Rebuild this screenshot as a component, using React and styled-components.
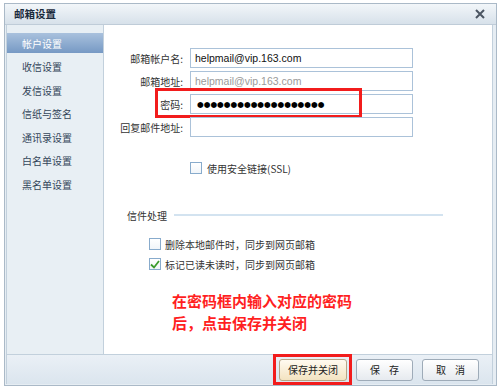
import React from "react";
import styled, { createGlobalStyle } from "styled-components";

const GlobalStyle = createGlobalStyle`
  html, body { margin: 0; padding: 0; background: #ffffff; }
  body { font-family: "Noto Sans CJK SC", "Liberation Sans", sans-serif; color: #2a2a2a; }
  * { box-sizing: border-box; }
`;

const Window = styled.div`
  margin: 3px 0 0 4px;
  width: 493px;
  height: 383px;
  border: 1px solid #aab9c7;
  background: #e6edf3;
  display: flex;
  flex-direction: column;
`;

const TitleBar = styled.div`
  height: 21px;
  flex: none;
  background: linear-gradient(#f2f6f9, #d7e1ea);
  border-bottom: 1px solid #bfccd8;
  display: flex;
  align-items: center;
  justify-content: space-between;
  padding: 0 11px 0 9px;
`;

const Title = styled.span`
  font-size: 10.5px;
  font-weight: bold;
  color: #1b2b3c;
  line-height: 1;
`;

const Close = styled.svg`
  width: 10px;
  height: 10px;
  display: block;
`;

const Panel = styled.div`
  flex: 1;
  display: flex;
  flex-direction: column;
  padding: 0 3px 1px 1px;
  min-height: 0;
`;

const Body = styled.div`
  height: 329px;
  flex: none;
  display: flex;
  border-left: 1px solid #c2d0dc;
  border-right: 1px solid #c2d0dc;
`;

const Sidebar = styled.div`
  width: 97px;
  flex: none;
  background: #e8eff4;
  border-right: 1px solid #c2d0dc;
  padding-top: 8px;
  display: flex;
  flex-direction: column;
  gap: 3.5px;
`;

const NavItem = styled.div`
  height: 20px;
  display: flex;
  align-items: center;
  padding-left: 15px;
  font-size: 10px;
  color: ${(p) => (p.$active ? "#ffffff" : "#34465a")};
  background: ${(p) =>
    p.$active ? "linear-gradient(#a9c1dd, #7699c4)" : "transparent"};
`;

const Main = styled.div`
  flex: 1;
  background: #ffffff;
  padding-top: 23px;
  display: flex;
  flex-direction: column;
`;

const Form = styled.div`
  display: flex;
  flex-direction: column;
  gap: 3px;
`;

const Row = styled.div`
  position: relative;
  display: flex;
  align-items: center;
  height: 20px;
  gap: 7px;
`;

const Label = styled.span`
  width: 79px;
  text-align: right;
  font-size: 10px;
  color: #333;
  white-space: nowrap;
`;

const Field = styled.div`
  width: 223px;
  height: 20px;
  border: 1px solid #abc2d9;
  display: flex;
  align-items: center;
  padding-left: 4px;
  font-family: "Liberation Sans", sans-serif;
  font-size: 10.5px;
  color: ${(p) => (p.$muted ? "#9a9a9a" : "#111")};
  background: #fff;
`;

const Dots = styled.span`
  font-family: "DejaVu Sans", sans-serif;
  font-size: 7.7px;
  color: #000;
  padding-left: 2px;
`;

const Highlight = styled.div`
  position: absolute;
  border: 3px solid #f21c1c;
  pointer-events: none;
`;

const PassHighlight = styled(Highlight)`
  left: 51px;
  top: -6px;
  width: 207px;
  height: 30px;
`;

const CheckRow = styled.div`
  display: flex;
  align-items: center;
  gap: ${(p) => p.$gap || 4}px;
  padding-left: ${(p) => p.$indent}px;
  margin-top: ${(p) => p.$top || 0}px;
  font-size: 10px;
  color: #333;
  height: 14px;
`;

const Box = styled.span`
  width: 12px;
  height: 12px;
  border: 1px solid #88abcc;
  background: linear-gradient(#ffffff, #f1f5f9);
  display: flex;
  align-items: center;
  justify-content: center;
  flex: none;
`;

const SectionHead = styled.div`
  display: flex;
  align-items: center;
  gap: 7px;
  padding-left: 23px;
  margin-top: 33px;
  height: 14px;
  font-size: 10px;
  color: #333;
`;

const Rule = styled.span`
  width: 269px;
  height: 2px;
  background: #d3e3f0;
`;

const Note = styled.div`
  margin-top: 19px;
  padding-left: 68px;
  font-size: 15px;
  font-weight: bold;
  line-height: 22px;
  color: #ff1f1f;
`;

const Footer = styled.div`
  flex: 1;
  border-top: 1px solid #c2d0dc;
  border-left: 1px solid #c2d0dc;
  border-right: 1px solid #c2d0dc;
  background: linear-gradient(#eaf0f6, #dbe5ee);
  display: flex;
  align-items: center;
  justify-content: flex-end;
  gap: 9px;
  padding-right: 13px;
`;

const ButtonWrap = styled.div`
  position: relative;
  display: flex;
`;

const Button = styled.button`
  width: ${(p) => p.$w}px;
  height: 22px;
  border-radius: 3px;
  border: 1px solid ${(p) => (p.$primary ? "#b7a586" : "#9eabb8")};
  background: ${(p) =>
    p.$primary
      ? "linear-gradient(#fffaf0, #f3e3c1)"
      : "linear-gradient(#ffffff, #e6eaef)"};
  font-family: "Noto Sans CJK SC", sans-serif;
  font-size: 10px;
  color: #222;
  padding: 0;
  word-spacing: 7px;
  cursor: pointer;
`;

const BtnHighlight = styled(Highlight)`
  left: -6px;
  top: -5px;
  right: -5px;
  bottom: -4px;
`;

const navItems = ["帐户设置", "收信设置", "发信设置", "信纸与签名", "通讯录设置", "白名单设置", "黑名单设置"];

const Check = () => (
  <svg width="10" height="9" viewBox="0 0 10 9">
    <path d="M1 4.5 L4 7.5 L9 1" fill="none" stroke="#3b9b2c" strokeWidth="1.8" />
  </svg>
);

export default function App() {
  return (
    <>
      <GlobalStyle />
      <Window>
        <TitleBar>
          <Title>邮箱设置</Title>
          <Close viewBox="0 0 10 10">
            <path d="M1 1 L9 9 M9 1 L1 9" stroke="#4b5562" strokeWidth="2" />
          </Close>
        </TitleBar>
        <Panel>
          <Body>
            <Sidebar>
              {navItems.map((t, i) => (
                <NavItem key={t} $active={i === 0}>{t}</NavItem>
              ))}
            </Sidebar>
            <Main>
              <Form>
                <Row>
                  <Label>邮箱帐户名:</Label>
                  <Field>helpmail@vip.163.com</Field>
                </Row>
                <Row>
                  <Label>邮箱地址:</Label>
                  <Field $muted>helpmail@vip.163.com</Field>
                </Row>
                <Row>
                  <Label>密码:</Label>
                  <Field><Dots>●●●●●●●●●●●●●●●●●●●</Dots></Field>
                  <PassHighlight />
                </Row>
                <Row>
                  <Label>回复邮件地址:</Label>
                  <Field />
                </Row>
              </Form>
              <CheckRow $indent={86} $top={24} $gap={5}>
                <Box />
                <span>使用安全链接(SSL)</span>
              </CheckRow>
              <SectionHead>
                <span>信件处理</span>
                <Rule />
              </SectionHead>
              <CheckRow $indent={45} $top={15}>
                <Box />
                <span>删除本地邮件时，同步到网页邮箱</span>
              </CheckRow>
              <CheckRow $indent={45} $top={6}>
                <Box><Check /></Box>
                <span>标记已读未读时，同步到网页邮箱</span>
              </CheckRow>
              <Note>
                <div>在密码框内输入对应的密码</div>
                <div>后，点击保存并关闭</div>
              </Note>
            </Main>
          </Body>
          <Footer>
            <ButtonWrap>
              <Button $primary $w={68}>保存并关闭</Button>
              <BtnHighlight />
            </ButtonWrap>
            <Button $w={57}>保 存</Button>
            <Button $w={57}>取 消</Button>
          </Footer>
        </Panel>
      </Window>
    </>
  );
}
